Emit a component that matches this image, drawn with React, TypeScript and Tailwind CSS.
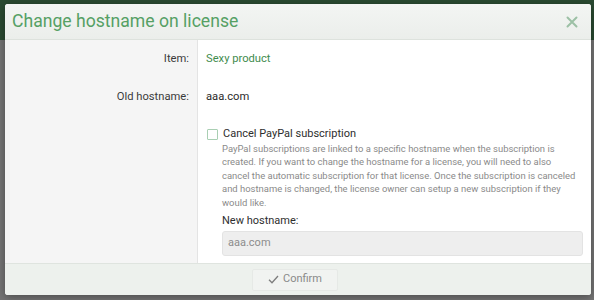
import React from "react";

const descLines = [
  "PayPal subscriptions are linked to a specific hostname when the subscription is",
  "created. If you want to change the hostname for a license, you will need to also",
  "cancel the automatic subscription for that license. Once the subscription is canceled",
  "and hostname is changed, the license owner can setup a new subscription if they",
  "would like.",
];

function Row({ label, children, className = "" }: { label?: string; children: React.ReactNode; className?: string }) {
  return (
    <div className="flex">
      <div className="w-[193px] shrink-0 bg-[#f5f5f5] border-r border-[#e4e4e4] pr-[8px] text-right text-[11.2px] text-[#3b3b3b]">
        <div className={className}>{label}</div>
      </div>
      <div className={`flex-1 pl-[8px] pr-[8px] ${className}`}>{children}</div>
    </div>
  );
}

export default function App() {
  return (
    <div
      className="w-[594px] h-[300px] overflow-hidden bg-[#747474] relative"
      style={{ fontFamily: "Roboto, 'Liberation Sans', sans-serif" }}
    >
      {/* dimmed page behind the overlay */}
      <div className="h-[40px] bg-[#2a4a31]" />
      <div className="absolute left-[5px] top-[4px] w-[586px] h-[291px] rounded-[3px] bg-white shadow-[0_2px_8px_rgba(0,0,0,0.35)] overflow-hidden flex flex-col">
        {/* header */}
        <div className="h-[36px] shrink-0 flex items-center justify-between pl-[7px] pr-[13px] bg-gradient-to-b from-[#f3f5f3] to-[#ebeeeb] border-b border-[#dde2dd]">
          <h1 className="text-[17.6px] leading-none text-[#55a064] pt-[1px]">Change hostname on license</h1>
          <svg width="12" height="12" viewBox="0 0 12 12" className="mt-[1px]">
            <path d="M1.5 1.5 L10.5 10.5 M10.5 1.5 L1.5 10.5" stroke="#9cc0a5" strokeWidth="2" strokeLinecap="round" />
          </svg>
        </div>

        {/* body */}
        <div className="flex-1 flex flex-col">
          <Row label="Item:" className="h-[38px] flex items-center justify-end">
            <span className="text-[11.2px] text-[#3f8c4e] w-full">Sexy product</span>
          </Row>
          <Row label="Old hostname:" className="h-[38px] flex items-center justify-end">
            <span className="text-[11.2px] text-[#2c2c2c] w-full">aaa.com</span>
          </Row>
          <div className="flex flex-1">
            <div className="w-[193px] shrink-0 bg-[#f5f5f5] border-r border-[#e4e4e4]" />
            <div className="flex-1 pl-[9px] pr-[8px] pt-[11px]">
              <label className="flex items-center gap-[5px]">
                <span className="block w-[11px] h-[11px] border border-[#a9cfb3] bg-white rounded-[1px]" />
                <span className="text-[11px] text-[#2e2e2e] leading-[14px]">Cancel PayPal subscription</span>
              </label>
              <p className="ml-[15px] mt-[1px] text-[9.45px] leading-[13.4px] text-[#8a8a8a] whitespace-nowrap">
                {descLines.map((l, i) => (
                  <React.Fragment key={i}>
                    {l}
                    {i < descLines.length - 1 && <br />}
                  </React.Fragment>
                ))}
              </p>
              <div className="ml-[15px] mt-[5px]">
                <div className="text-[11px] leading-[14px] text-[#2e2e2e]">New hostname:</div>
                <div className="mt-[3px] h-[25px] rounded-[3px] bg-[#eeeeee] border border-[#e3e3e3] flex items-center px-[5px] text-[11px] text-[#8c8c8c]">
                  aaa.com
                </div>
              </div>
            </div>
          </div>
        </div>

        {/* footer */}
        <div className="h-[32px] shrink-0 bg-[#edf1ed] border-t border-[#dfe4df] flex items-center pl-[247px]">
          <button className="h-[22px] w-[86px] flex items-center justify-center gap-[4px] bg-[#f1f3f1] border border-[#e6e9e6] rounded-[2px] text-[11px] text-[#8a8a8a]">
            <svg width="11" height="9" viewBox="0 0 11 9">
              <path d="M1 4.8 L4 7.8 L10 1" fill="none" stroke="#7d7d7d" strokeWidth="1.3" />
            </svg>
            Confirm
          </button>
        </div>
      </div>
    </div>
  );
}
